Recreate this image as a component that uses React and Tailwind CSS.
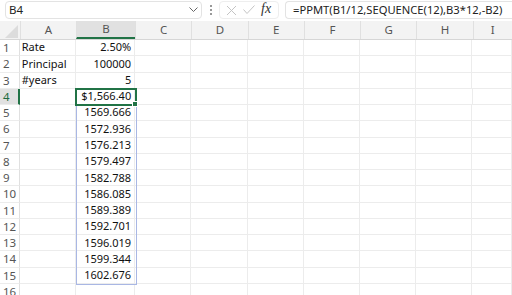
import React from 'react';

const cols = [
  { key: 'A', w: 57 },
  { key: 'B', w: 60 },
  { key: 'C', w: 57 },
  { key: 'D', w: 57 },
  { key: 'E', w: 57 },
  { key: 'F', w: 57 },
  { key: 'G', w: 57 },
  { key: 'H', w: 57 },
  { key: 'I', w: 40 },
];

const values = [
  ['Rate', '2.50%'],
  ['Principal', '100000'],
  ['#years', '5'],
  ['', '$1,566.40'],
  ['', '1569.666'],
  ['', '1572.936'],
  ['', '1576.213'],
  ['', '1579.497'],
  ['', '1582.788'],
  ['', '1586.085'],
  ['', '1589.389'],
  ['', '1592.701'],
  ['', '1596.019'],
  ['', '1599.344'],
  ['', '1602.676'],
  ['', ''],
];

const ROW_H = 16.27;

const App = () => {
  return (
    <div className="w-[512px] h-[295px] overflow-hidden bg-white text-[#222] font-['Noto_Sans',sans-serif]">
      {/* Formula bar */}
      <div className="h-[21px] flex items-start pt-[1px]">
        <div className="ml-[5px] w-[197px] h-[18px] border border-[#e3e3e3] rounded-[4px] flex items-center justify-between pl-[3px] pr-[3px] text-[11.5px]">
          <span>B4</span>
          <svg width="9" height="6" viewBox="0 0 9 6" className="text-[#666]">
            <path d="M0.5 0.5 L4.5 4.5 L8.5 0.5" fill="none" stroke="currentColor" strokeWidth="1" />
          </svg>
        </div>
        <div className="w-[17px] h-[18px] flex flex-col items-center justify-center gap-[2px]">
          <span className="w-[2px] h-[2px] bg-[#999]"></span>
          <span className="w-[2px] h-[2px] bg-[#999]"></span>
          <span className="w-[2px] h-[2px] bg-[#999]"></span>
        </div>
        <div className="w-[60px] h-[18px] border border-[#eeeeee] rounded-[4px] flex items-center pl-[6px] gap-[6px]">
          <svg width="11" height="11" viewBox="0 0 11 11">
            <path d="M1 1 L10 10 M10 1 L1 10" stroke="#c4c4c4" strokeWidth="1" fill="none" />
          </svg>
          <svg width="12" height="10" viewBox="0 0 12 10">
            <path d="M0.5 4.5 L4 8.5 L11.5 0.5" stroke="#c4c4c4" strokeWidth="1" fill="none" />
          </svg>
          <span className="font-['Liberation_Serif',serif] italic text-[14px] leading-none text-[#333] -mt-[2px]">fx</span>
        </div>
        <div className="ml-[6px] flex-1 h-[18px] border border-[#e3e3e3] border-r-0 rounded-l-[4px] flex items-center pl-[7px] text-[11.2px] whitespace-nowrap">
          =PPMT(B1/12,SEQUENCE(12),B3*12,-B2)
        </div>
      </div>

      {/* Grid */}
      <div className="relative">
        {/* Column headers */}
        <div className="flex h-[19px] bg-[#f3f3f3] border-b border-[#d6d6d6]">
          <div className="w-[20px] h-full relative">
            <svg width="20" height="19" className="absolute inset-0">
              <path d="M18 4 L18 17 L5 17 Z" fill="#dcdcdc" />
            </svg>
          </div>
          {cols.map((c) => (
            <div
              key={c.key}
              style={{ width: c.w }}
              className={`h-full flex items-center justify-center text-[11.5px] text-[#555] border-l border-[#e0e0e0] ${
                c.key === 'B' ? 'bg-[#e1e1e1] border-b-2 border-b-[#217346] text-[#1e6b40]' : ''
              }`}
            >
              {c.key}
            </div>
          ))}
        </div>

        {/* Rows */}
        {values.map((row, i) => (
          <div key={i} className="flex" style={{ height: ROW_H }}>
            <div
              className={`w-[20px] h-full flex items-center pl-[3px] text-[11.5px] border-b border-[#ececec] ${
                i === 3 ? 'bg-[#e1e1e1] text-[#1e6b40] border-r-2 border-r-[#217346]' : 'text-[#555] border-r border-r-[#e0e0e0]'
              }`}
            >
              {i + 1}
            </div>
            {cols.map((c, j) => (
              <div
                key={c.key}
                style={{ width: c.w }}
                className={`h-full flex items-center text-[11px] text-[#111] border-r border-b border-[#ececec] whitespace-nowrap ${
                  j === 1 ? 'justify-end pr-[3px]' : 'pl-[2px]'
                }`}
              >
                {j === 0 ? row[0] : j === 1 ? row[1] : ''}
              </div>
            ))}
          </div>
        ))}

        {/* Spill range outline B4:B15 */}
        <div
          className="absolute left-[76px] w-[61px] border border-[#a9b7e4] pointer-events-none"
          style={{ top: 19 + ROW_H * 3, height: ROW_H * 12 + 1 }}
        ></div>
        {/* Active cell B4 */}
        <div
          className="absolute left-[75px] w-[62px] border-2 border-[#217346] pointer-events-none"
          style={{ top: 19 + ROW_H * 3 - 1, height: ROW_H + 2 }}
        >
          <span className="absolute -right-[3px] -bottom-[3px] w-[4px] h-[4px] bg-[#217346] border border-white box-content"></span>
        </div>
      </div>
    </div>
  );
};

export default App;
